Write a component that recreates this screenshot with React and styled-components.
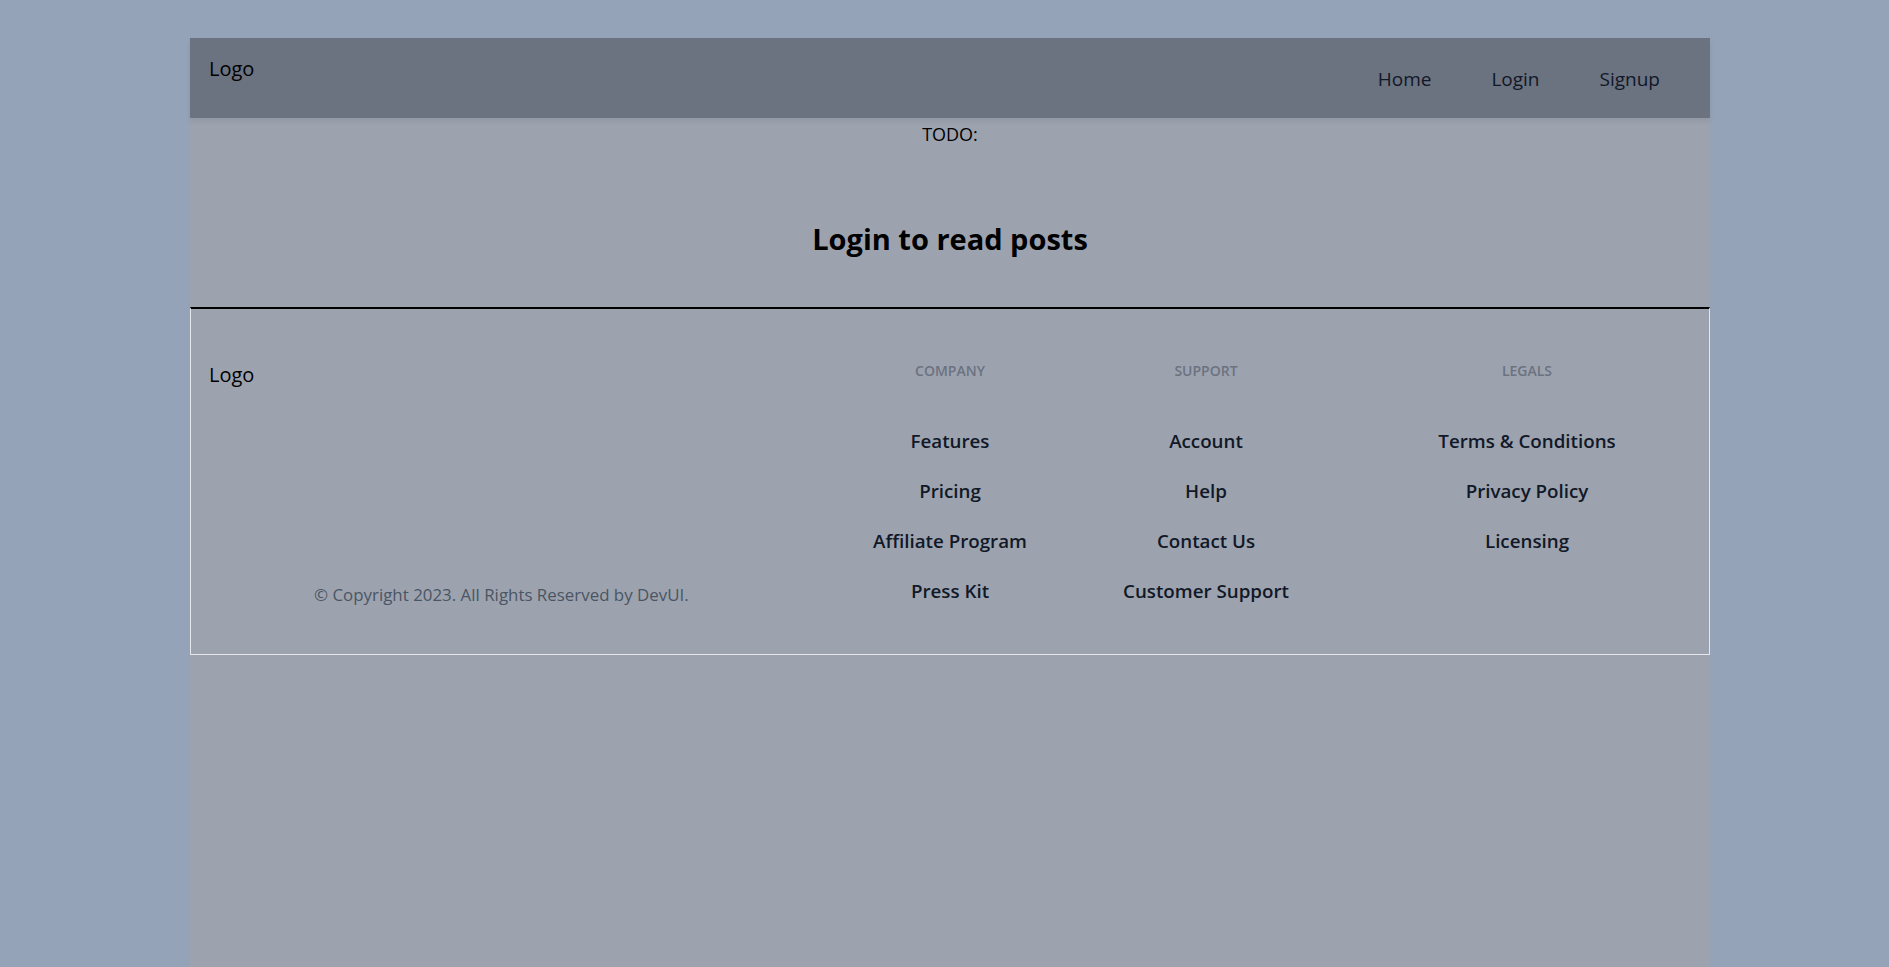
import styled, { createGlobalStyle } from "styled-components";

const GlobalStyle = createGlobalStyle`
  html, body {
    margin: 0;
    padding: 0;
  }

  body {
    background: #94a3b8;
    font-family: "Open Sans", "Noto Sans", sans-serif;
    color: #000;
  }
`;

const Shell = styled.div`
  width: 1520px;
  min-height: calc(100vh - 38px);
  margin: 38px 0 0 190px;
  background: #9ca3af;
`;

const Header = styled.header`
  height: 80px;
  display: flex;
  justify-content: space-between;
  align-items: flex-start;
  padding: 0 50px 0 19px;
  background: #6b7280;
  box-shadow: 0 3px 5px rgba(0, 0, 0, 0.08);
  box-sizing: border-box;
`;

const Brand = styled.div`
  font-size: 20px;
  line-height: 28px;
  padding-top: 17px;
`;

const Nav = styled.nav`
  display: flex;
  gap: 60px;
  padding-top: 28px;
`;

const NavLink = styled.a`
  font-size: 19px;
  line-height: 27px;
  color: #111827;
  text-decoration: none;
`;

const Main = styled.main`
  text-align: center;
  padding-top: 3px;
  padding-bottom: 48px;
`;

const Todo = styled.p`
  margin: 0;
  font-size: 18px;
  line-height: 27px;
`;

const Title = styled.h1`
  margin: 71px 0 0;
  font-size: 29px;
  line-height: 40px;
  font-weight: 700;
`;

const Footer = styled.footer`
  display: flex;
  border: 1px solid #e5e7eb;
  border-top: 2px solid #000;
  padding: 52px 0 50px 18px;
`;

const FooterBrand = styled.div`
  width: 624px;
  display: flex;
  flex-direction: column;
`;

const FooterLogo = styled.div`
  font-size: 20px;
  line-height: 28px;
`;

const Copyright = styled.p`
  margin: auto 0 0 105px;
  font-size: 16.9px;
  line-height: 19px;
  color: #4b5563;
`;

const Column = styled.div`
  width: ${({ width }) => width}px;
  display: flex;
  flex-direction: column;
  align-items: center;
  text-align: center;
`;

const ColumnTitle = styled.h3`
  margin: 0 0 46px;
  font-size: 14px;
  line-height: 20px;
  font-weight: 600;
  text-transform: uppercase;
  color: #6b7280;
`;

const LinkList = styled.ul`
  list-style: none;
  margin: 0;
  padding: 0;
  display: flex;
  flex-direction: column;
  gap: 23px;
`;

const FooterLink = styled.a`
  display: block;
  font-size: 18.75px;
  line-height: 27px;
  font-weight: 600;
  color: #111827;
  text-decoration: none;
`;

const columns = [
  {
    title: "Company",
    width: 234,
    links: ["Features", "Pricing", "Affiliate Program", "Press Kit"],
  },
  {
    title: "Support",
    width: 278,
    links: ["Account", "Help", "Contact Us", "Customer Support"],
  },
  {
    title: "Legals",
    width: 364,
    links: ["Terms & Conditions", "Privacy Policy", "Licensing"],
  },
];

export default function App() {
  return (
    <>
      <GlobalStyle />
      <Shell>
        <Header>
          <Brand>Logo</Brand>
          <Nav>
            <NavLink href="#">Home</NavLink>
            <NavLink href="#">Login</NavLink>
            <NavLink href="#">Signup</NavLink>
          </Nav>
        </Header>
        <Main>
          <Todo>TODO:</Todo>
          <Title>Login to read posts</Title>
        </Main>
        <Footer>
          <FooterBrand>
            <FooterLogo>Logo</FooterLogo>
            <Copyright>© Copyright 2023. All Rights Reserved by DevUI.</Copyright>
          </FooterBrand>
          {columns.map((col) => (
            <Column key={col.title} width={col.width}>
              <ColumnTitle>{col.title}</ColumnTitle>
              <LinkList>
                {col.links.map((link) => (
                  <li key={link}>
                    <FooterLink href="#">{link}</FooterLink>
                  </li>
                ))}
              </LinkList>
            </Column>
          ))}
        </Footer>
      </Shell>
    </>
  );
}
